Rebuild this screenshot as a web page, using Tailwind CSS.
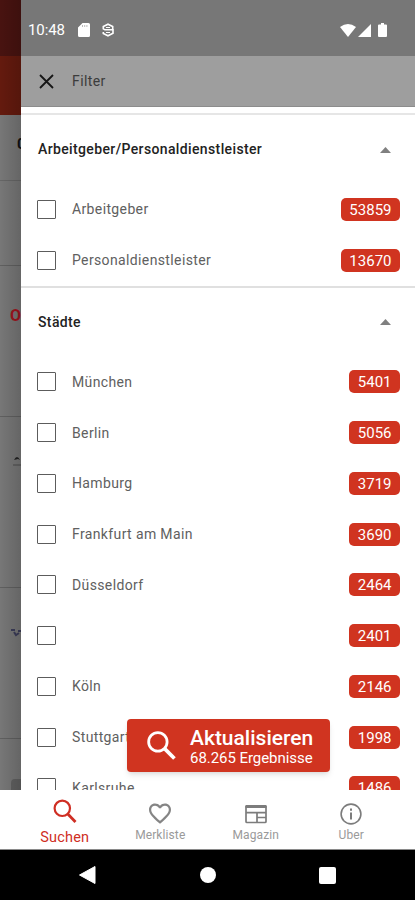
<!DOCTYPE html>
<html lang="de">
<head>
    <meta charset="UTF-8">
    <meta name="viewport" content="width=device-width, initial-scale=1.0">
    <title>Filter</title>
    <script src="https://cdn.jsdelivr.net/npm/@tailwindcss/browser@4"></script>
</head>
<body class="bg-white font-['Roboto',sans-serif] h-[900px] overflow-hidden flex flex-col">
    <div class="h-[790px] flex overflow-hidden">
        <!-- Dimmed page behind the drawer -->
        <div class="relative w-[21px] shrink-0 bg-[#777777] flex flex-col overflow-hidden">
            <div class="h-[56px] shrink-0 bg-[#481310]"></div>
            <div class="h-[59px] shrink-0 bg-[#641a0e]"></div>
            <div class="h-[66px] shrink-0 border-b border-[#666666] pl-[17px] pt-[20px] text-[15px] leading-[18px] font-bold text-[#111111]">0</div>
            <div class="h-[85px] shrink-0 border-b border-[#606060]"></div>
            <div class="h-[151px] shrink-0 border-b border-[#606060] pl-[10px] pt-[41px] text-[16px] leading-[18px] font-bold text-[#a0131d]">O</div>
            <div class="h-[171px] shrink-0 border-b border-[#606060] pl-[12px] pt-[38px]">
                <svg class="w-[9px] h-[12px]" viewBox="0 0 9 12"><path d="M2 5Q5-1 8 5L6 4z" fill="#222"/><path d="M1 10h8" stroke="#5a5a5a" stroke-width="1.5"/></svg>
            </div>
            <div class="h-[151px] shrink-0 border-b border-[#606060] pl-[10px] pt-[40px]">
                <svg class="w-[11px] h-[10px]" viewBox="0 0 11 10"><path d="M1 2h4M8 3h3M4 4l2 3 3-2" fill="none" stroke="#3b3c58" stroke-width="2"/></svg>
            </div>
            <div class="grow pl-[11px] pt-[40px]">
                <div class="size-[14px] rounded bg-[#606060]"></div>
            </div>
            <div class="absolute inset-0 bg-linear-to-r from-black/0 to-black/15"></div>
        </div>

        <!-- Drawer -->
        <div class="grow flex flex-col bg-white">
            <div class="h-[56px] shrink-0 bg-[#777777] flex items-center pl-[7px] pr-[28px] pt-[4px] text-white">
                <span class="text-[15px] w-[38px] tracking-[-0.1px]">10:48</span>
                <svg class="ml-[12px] w-[12px] h-[14px]" viewBox="0 0 12 14" fill="#fff"><path d="M4.5 0H10.5a1.5 1.5 0 0 1 1.5 1.5v11a1.5 1.5 0 0 1-1.5 1.5h-9A1.5 1.5 0 0 1 0 12.500V4.500z"/><path d="M4.500 2v2M6.700 2v2M8.900 2v2" stroke="#aaa" stroke-width=".8"/></svg>
                <svg class="ml-[12px] w-[12px] h-[14px]" viewBox="0 0 12 14" fill="none" stroke="#fff" stroke-width="1.6"><path d="M10.700 6.200V3.500L6 1.200 1.300 3.500v2.200L3 6.800h8v3.500L6 12.800 1.300 10.500V9"/><path d="M4 4.500h4M4 9.500h4" stroke-width="1.200"/></svg>
                <svg class="ml-auto w-[16px] h-[13px]" viewBox="0 0 16 13"><path d="M0 3Q8-3 16 3L8 13z" fill="#fff"/></svg>
                <svg class="ml-[2px] w-[13px] h-[13px]" viewBox="0 0 13 13"><path d="M13 0v13H0z" fill="#fff"/></svg>
                <svg class="ml-[7px] w-[9px] h-[14px]" viewBox="0 0 9 14"><path d="M3 0h3v1.500h2q1 0 1 1V13q0 1-1 1H1q-1 0-1-1V2.500q0-1 1-1h2z" fill="#fff"/></svg>
            </div>
            <div class="h-[51px] shrink-0 bg-[#9e9e9e] border-b border-[#8c8c8c] flex items-center pl-[18px]">
                <svg class="w-[15px] h-[15px]" viewBox="0 0 15 15"><path d="M1 1l13 13M14 1L1 14" stroke="#161616" stroke-width="1.8"/></svg>
                <span class="ml-[18px] text-[14px] tracking-[0.4px] text-[#3c3c3c]">Filter</span>
            </div>

            <div class="mt-[6px] border-t-2 border-[#e6e6e6] flex flex-col">
                <div class="h-[69px] flex items-center justify-between pl-[17px] pr-[24px]">
                    <span class="text-[14px] font-medium tracking-[0.37px] text-[#222222]">Arbeitgeber/Personaldienstleister</span>
                    <svg class="w-[11px] h-[6px]" viewBox="0 0 11 6"><path d="M0 6l5.500-6L11 6z" fill="#808080"/></svg>
                </div>
                <div id="employers"></div>
            </div>
            <div class="border-t-2 border-[#e0e0e0] flex flex-col">
                <div class="h-[69px] flex items-center justify-between pl-[17px] pr-[24px]">
                    <span class="text-[14px] font-medium tracking-[0.37px] text-[#222222]">Städte</span>
                    <svg class="w-[11px] h-[6px]" viewBox="0 0 11 6"><path d="M0 6l5.500-6L11 6z" fill="#808080"/></svg>
                </div>
                <div id="cities"></div>
            </div>
        </div>
    </div>

    <!-- Update button -->
    <button class="absolute left-[127px] top-[719px] w-[203px] h-[53px] rounded-[4px] bg-[#d03420] text-white shadow-md flex items-center pl-[20px]">
        <svg class="w-[29px] h-[29px]" viewBox="0 0 28 28" fill="none" stroke="#fff"><circle cx="10.500" cy="10.500" r="8.900" stroke-width="2.700"/><path d="M17 17l9.500 9.500" stroke-width="3.600"/></svg>
        <span class="ml-[14px] pt-[2px] flex flex-col items-start">
            <span class="text-[21px] leading-[23px] font-medium">Aktualisieren</span>
            <span class="text-[15px] leading-[17px] tracking-[-0.05px]">68.265 Ergebnisse</span>
        </span>
    </button>

    <!-- Tab bar -->
    <nav class="h-[60px] shrink-0 bg-white border-b border-[#8a8a8a] pl-[17px] pr-[16px] grid grid-cols-4 text-[12px] text-[#9a9a9a]">
        <a class="flex flex-col items-center pt-[9px] text-[#cf2e23]">
            <svg class="w-[24px] h-[25px]" viewBox="0 0 24 25" fill="none" stroke="#cf2e23"><circle cx="9.300" cy="9.300" r="7.700" stroke-width="2.200"/><path d="M14.800 15l7.700 8" stroke-width="2.800"/></svg>
            <span class="mt-[5px] text-[14.5px] leading-[18px] tracking-[0.15px]">Suchen</span>
        </a>
        <a class="flex flex-col items-center pt-[13px]">
            <svg class="w-[22px] h-[21px]" viewBox="2 2.500 20 19" preserveAspectRatio="none" fill="#858585"><path d="M16.500 3c-1.740 0-3.410.810-4.500 2.090C10.910 3.810 9.240 3 7.500 3 4.420 3 2 5.420 2 8.500c0 3.780 3.400 6.860 8.550 11.540L12 21.350l1.450-1.320C18.600 15.360 22 12.280 22 8.500 22 5.420 19.580 3 16.500 3zm-4.400 15.550l-.1.100-.1-.1C7.140 14.240 4 11.390 4 8.500 4 6.500 5.500 5 7.500 5c1.540 0 3.040.990 3.570 2.360h1.870C13.460 5.990 14.960 5 16.500 5c2 0 3.500 1.500 3.500 3.500 0 2.890-3.140 5.740-7.900 10.050z"/></svg>
            <span class="mt-[3px] leading-[16px] tracking-[0.1px]">Merkliste</span>
        </a>
        <a class="flex flex-col items-center pt-[14px]">
            <svg class="w-[22px] h-[20px]" viewBox="0 0 22 20" fill="none" stroke="#7c7c7c"><path d="M1 2v15.500q0 1 1 1h18q1 0 1-1V2" stroke-width="1.700"/><path d="M.500 2.500h21" stroke-width="3"/><path d="M1 8.700h20M12 9v9M12 13.500h9" stroke-width="1.700"/><path d="M3.500 1V0M6.500 1V0M9.500 1V0M12.500 1V0M15.500 1V0M18.500 1V0" stroke="#fff"/></svg>
            <span class="mt-[3px] leading-[16px] tracking-[0.1px]">Magazin</span>
        </a>
        <a class="flex flex-col items-center pt-[13px]">
            <svg class="w-[22px] h-[22px]" viewBox="0 0 22 22" fill="none" stroke="#7c7c7c"><circle cx="11" cy="11" r="9.900" stroke-width="1.600"/><path d="M11 9.500v7M11 5.500v2.200" stroke-width="2"/></svg>
            <span class="mt-[2px] leading-[16px] tracking-[0.1px]">Uber</span>
        </a>
    </nav>

    <!-- System navigation -->
    <div class="h-[50px] shrink-0 bg-black flex items-center pl-[79px]">
        <svg class="w-[17px] h-[18px]" viewBox="0 0 17 18"><path d="M16 .500v17L.500 9z" fill="#fff" stroke="#fff" stroke-linejoin="round"/></svg>
        <div class="ml-[104px] size-[16px] rounded-full bg-white"></div>
        <div class="ml-[103px] size-[17px] rounded-[2px] bg-white"></div>
    </div>

    <script>
        const employers = [
            ['Arbeitgeber', 53859],
            ['Personaldienstleister', 13670]
        ];
        const cities = [
            ['München', 5401],
            ['Berlin', 5056],
            ['Hamburg', 3719],
            ['Frankfurt am Main', 3690],
            ['Düsseldorf', 2464],
            ['', 2401],
            ['Köln', 2146],
            ['Stuttgart', 1998],
            ['Karlsruhe', 1486]
        ];

        function renderRows(id, rows) {
            document.getElementById(id).innerHTML = rows.map(([name, count]) => `
                <label class="h-[50.75px] flex items-center pl-[16px] pr-[15px]">
                    <span class="size-[19px] border-[1.5px] border-[#5c5c5c] rounded-[1px]"></span>
                    <span class="ml-[16px] pt-px text-[14px] tracking-[0.37px] text-[#606060]">${name}</span>
                    <span class="ml-auto h-[23px] px-[8.5px] rounded-[5px] bg-[#d03420] text-white text-[15px] leading-[24px]">${count}</span>
                </label>
            `).join('');
        }

        renderRows('employers', employers);
        renderRows('cities', cities);
    </script>
</body>
</html>
